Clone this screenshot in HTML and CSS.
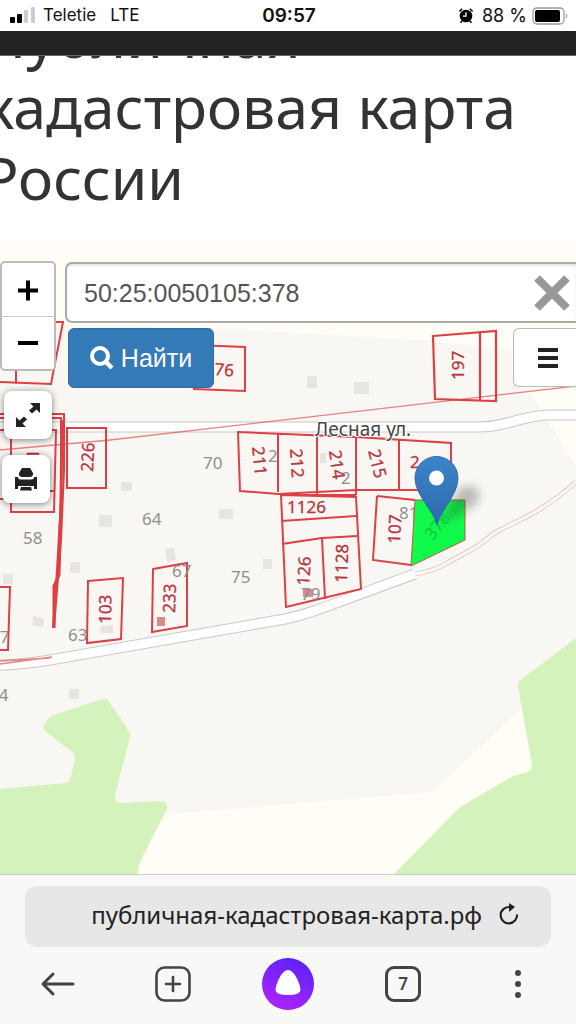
FILE: index.html
```html
<!DOCTYPE html>
<html lang="ru">
<head>
<meta charset="utf-8">
<meta name="viewport" content="width=device-width, initial-scale=1">
<title>Публичная кадастровая карта России</title>
<link rel="stylesheet" href="styles.css">
</head>
<body>
<div class="screen">
  <header class="status">
    <div class="status-left">
      <svg class="signal" viewBox="0 0 26 17" width="26" height="17" aria-hidden="true">
        <rect x="0" y="10" width="5" height="6" rx="1"/><rect x="7" y="7" width="5" height="9" rx="1"/>
        <rect x="14" y="3" width="4" height="13" rx="1" fill="#ccc"/><rect x="21" y="0" width="4" height="16" rx="1" fill="#ccc"/>
      </svg>
      <span>Teletie</span><span>LTE</span>
    </div>
    <time class="clock">09:57</time>
    <div class="status-right">
      <svg viewBox="0 0 14 15" width="14" height="15" aria-hidden="true">
        <circle cx="7" cy="8" r="6.3"/><path d="M3 13l-1.500 1.700M11 13l1.500 1.700" stroke="#000" stroke-width="1.600"/>
        <path d="M.4 3.400L3.200.8M13.600 3.400L10.800.8" stroke="#000" stroke-width="1.500"/>
        <path d="M7 4.200v4H3.800" fill="none" stroke="#fff" stroke-width="1.300"/>
      </svg>
      <span>88 %</span>
      <svg viewBox="0 0 36 18" width="36" height="18" aria-hidden="true">
        <rect x="1" y="1" width="31" height="16" rx="4" fill="none" stroke="#999" stroke-width="1.300"/>
        <rect x="3" y="3" width="25" height="12" rx="2"/><path d="M34 6q2 3 0 6z" fill="#888"/>
      </svg>
    </div>
  </header>
  <div class="site-bar"></div>
  <main>
    <div class="title-clip"><h1>Публичная<br>кадастровая карта<br>России</h1></div>
    <section class="map" aria-label="Кадастровая карта">
      <svg class="map-canvas" viewBox="0 245 576 629" preserveAspectRatio="xMidYMin slice">
        <defs>
          <linearGradient id="pin" x1="0" y1="0" x2="0" y2="1"><stop offset="0" stop-color="#3a85c9"/><stop offset="1" stop-color="#2f68ad"/></linearGradient>
          <filter id="soft" x="-50%" y="-50%" width="200%" height="200%"><feGaussianBlur stdDeviation="5"/></filter>
        </defs>
        <rect y="245" width="576" height="629" fill="#fffdf6"/>
        <path fill="#f9f7f3" d="M0 322L214 328L430 341L510 350L535 400L576 466V690L518 712L432 792L288 804L167 814L0 820z"/>
        <g fill="#d4f2bc">
          <path d="M0 789L66 783Q70 782 71 776L75 759Q75 754 71 751L45 731Q42 729 44 725Q48 717 54 715L102 699Q107 698 110 703L129 731Q131 734 130 737L115 795Q114 803 122 803L160 801Q168 801 167 809L140 862Q138 867 138 874H0z"/>
          <path d="M576 638L519 681Q518 683 518 686L532 765Q532 770 528 772L513 776L460 807L394 874H576z"/>
        </g>
        <g fill="#e7e5e1">
          <path d="M307 376h10v12h-10zM354 382h15v12h-15zM121 482h11v9h-11zM99 515h13v12H99zM165 549l9-1 2 12-9 2zM70 562h10v11H70zM3 574h10v10H3zM33 616l11 2-1 9-11-1zM101 626l12-1v8h-13zM69 689h10v10H69zM219 509h14v10h-14zM263 559h9v10h-9zM320 453h6v10h-6z"/>
        </g>
        <!-- roads -->
        <g fill="none">
          <path stroke="#c9c8c6" stroke-width="11" d="M0 427H478C510 427 520 415 550 415H576M0 665Q18 665 50 660L285 619C310 614 335 603 415 574"/>
          <path stroke="#fff" stroke-width="9" d="M0 427H478C510 427 520 415 550 415H576M0 665Q18 665 50 660L285 619C310 614 335 603 416 573.500"/>
          <path stroke="#e5c9c2" stroke-width="5" d="M415 574Q435 571 449 562L478 546L496 532L530 515Q555 501 576 482"/>
          <path stroke="#fffaf7" stroke-width="3" d="M415 574Q435 571 449 562L478 546L496 532L530 515Q555 501 576 482"/>
        </g>
        <!-- boundaries -->
        <g fill="none" stroke="#dc4045" stroke-width="2">
          <path d="M0 322H63L51 384L0 382M16 384V360M193 345L245 347V391L193 389"/>
          <path d="M433 336L496 331V401L435 399zM480 333V401" stroke-width="2.200"/>
          <path d="M67 428H106V488H67zM0 414H64V470L61 540L54 628M0 418H61V500L57 570L53 628M0 430H56L54 512H11V430M0 499H12M50 491H54"/>
          <path d="M62 420L61 500L59 575L54 586V628" stroke-width="3"/>
          <path d="M238 432L356 437L451 443V490H356L278 494L240 491zM278 434V492M317 435V494M356 437V495M399 440V490"/>
          <path d="M281 495L356 497L361 589L286 607zM281 521L356 516M282 544L322 538L357 536M322 538L325 599M282 495H356"/>
          <path d="M377 496L415 500M377 496L373 560L411 565M88 581L123 578L121 639L87 643zM153 569L187 563V626L152 632zM0 587H10L8 650H0"/>
          <path opacity=".65" stroke-width="1.300" d="M0 450L110 440L576 386M0 664L52 657M0 661L50 658"/>
        </g>
        <path fill="#d98b8b" d="M157 617h8v9h-8zM303 589h10v8h-10z"/>
        <g class="house">
          <text x="203" y="469">70</text><text x="142" y="525">64</text><text x="23" y="544">58</text><text x="231" y="583">75</text>
          <text x="172" y="577">67</text><text x="68" y="641">63</text><text x="-10" y="643">57</text><text x="-11" y="701">74</text>
          <text x="268" y="462">2</text><text x="341" y="484">2</text><text x="301" y="600">79</text><text x="399" y="519">81</text>
        </g>
        <g class="parcel">
          <text x="214" y="375" transform="rotate(5 214 375)">76</text>
          <text transform="translate(464 380) rotate(-90)">197</text>
          <text transform="translate(93 472) rotate(-87)">226</text>
          <text transform="translate(39 459) rotate(-90)">1</text>
          <text transform="translate(252 447) rotate(84)">211</text>
          <text transform="translate(290 449) rotate(86)">212</text>
          <text transform="translate(329 451) rotate(82)">214</text>
          <text transform="translate(368 451) rotate(76)">215</text>
          <text x="410" y="468">2</text><text x="287" y="513">1126</text>
          <text transform="translate(309 586) rotate(-86)">126</text>
          <text transform="translate(347 583) rotate(-88)">1128</text>
          <text transform="translate(400 544) rotate(-87)">107</text>
          <text transform="translate(111 624) rotate(-89)">103</text>
          <text transform="translate(175 613) rotate(-88)">233</text>
        </g>
        <text class="street" x="315" y="436">Лесная ул.</text>
        <path fill="#10fa4b" stroke="#c4573c" stroke-width="1" d="M415 500H465V540L411 566z"/>
        <path d="M440 524L458 490Q472 480 479 492Q482 504 460 514z" fill="#333" opacity=".3" filter="url(#soft)"/>
        <text class="parcel-active" transform="translate(433 541) rotate(-52)">378</text>
        <path fill="url(#pin)" stroke="#2d6dad" stroke-width="1" d="M437 525C434 511 415 495 415 478A21.500 21.500 0 0 1 458 478C458 495 440 511 437 525z"/>
        <circle cx="436.500" cy="478" r="7.500" fill="#fff"/>
      </svg>
      <div class="map-ui">
        <div class="tools">
          <div class="zoom">
            <button type="button" aria-label="Приблизить"><svg viewBox="0 0 22 22" width="22" height="22"><path d="M1 11.500h20M11 1.500v20" stroke="#000" stroke-width="4"/></svg></button>
            <button type="button" aria-label="Отдалить"><svg viewBox="0 0 22 22" width="22" height="22"><path d="M1 11h20" stroke="#000" stroke-width="4"/></svg></button>
          </div>
          <button class="tool full" type="button" aria-label="Во весь экран"><svg viewBox="0 0 26 26" width="26" height="26" fill="#222"><path d="M15 1h10v10l-3.500-3.500-4.500 4-3-3 4.500-4zM11 25H1V15l3.500 3.500 4.500-4 3 3-4.500 4z"/></svg></button>
          <button class="tool print" type="button" aria-label="Печать"><svg viewBox="0 0 24 24" width="24" height="24" fill="#222"><path d="M8 1h8l3 5v2q-1 2-3 2H8q-2 0-3-2V6zM1 10h3v1q1 1.500 3 1.500h10q2 0 3-1.500v-1h3v12h-3v-3H4v3H1zM7 20h10l1 3.500H6z"/></svg></button>
        </div>
        <form class="search" onsubmit="return false">
          <div class="field">
            <input type="text" value="50:25:0050105:378" aria-label="Кадастровый номер">
            <button class="clear" type="reset" aria-label="Очистить"><svg viewBox="0 0 36 36" width="36" height="36"><path d="M3 3L33 33M33 3L3 33" stroke="#999" stroke-width="8"/></svg></button>
          </div>
          <div class="actions">
            <button class="find" type="submit"><svg viewBox="0 0 24 24" width="24" height="24" fill="none" stroke="#fff"><circle cx="10" cy="10" r="8" stroke-width="4"/><path d="M15.500 15.500L22 22" stroke-width="4.500"/></svg>Найти</button>
            <button class="menu" type="button" aria-label="Меню"><svg viewBox="0 0 22 22" width="22" height="22"><path d="M1 3h20M1 11h20M1 19h20" stroke="#222" stroke-width="4"/></svg></button>
          </div>
        </form>
      </div>
    </section>
  </main>
  <footer class="browser">
    <div class="address">
      <span>публичная-кадастровая-карта.рф</span>
      <button type="button" aria-label="Обновить"><svg viewBox="0 0 22 24" width="22" height="24"><path d="M19 11.500A8.200 8.200 0 1 1 11 4h3" fill="none" stroke="#222" stroke-width="2.200"/><path d="M11 0l6 4-6 5z" fill="#222"/></svg></button>
    </div>
    <nav class="tabs" aria-label="Браузер">
      <button type="button" aria-label="Назад"><svg viewBox="0 0 36 26" width="36" height="26" fill="none" stroke="#444" stroke-width="3" stroke-linecap="round" stroke-linejoin="round"><path d="M33 13H3M13 3L3 13l10 10"/></svg></button>
      <button type="button" aria-label="Новая вкладка"><svg viewBox="0 0 36 36" width="36" height="36" fill="none" stroke="#444" stroke-width="2.600"><rect x="1.500" y="1.500" width="33" height="33" rx="8"/><path d="M18 11v14M11 18h14" stroke-linecap="round"/></svg></button>
      <button type="button" aria-label="Алиса"><svg viewBox="0 0 52 52" width="52" height="52"><defs><linearGradient id="alice" x1=".7" y1="0" x2=".3" y2="1"><stop offset="0" stop-color="#5a22fa"/><stop offset="1" stop-color="#ae24fb"/></linearGradient></defs><circle cx="26" cy="26" r="26" fill="url(#alice)"/><path fill="#fff" d="M26 12C32 12 38 25 38.500 32Q38.500 37 26 37T13.500 32C14 25 20 12 26 12z"/></svg></button>
      <button type="button" aria-label="Вкладки: 7"><span class="count">7</span></button>
      <button type="button" aria-label="Ещё"><svg viewBox="0 0 6 28" width="6" height="28" fill="#444"><circle cx="3" cy="3" r="3"/><circle cx="3" cy="14" r="3"/><circle cx="3" cy="25" r="3"/></svg></button>
    </nav>
  </footer>
</div>
</body>
</html>
```
FILE: styles.css
```css
* { box-sizing: border-box; }
body { margin: 0; background: #fff; font-family: "Noto Sans", sans-serif; color: #333; }
button { margin: 0; padding: 0; border: 0; background: none; color: inherit; font: inherit; display: flex; align-items: center; justify-content: center; }
svg { display: block; flex: none; }
.screen { display: flex; flex-direction: column; min-height: 100vh; overflow: hidden; }
.status { display: grid; grid-template-columns: 1fr auto 1fr; align-items: center; padding: 0 8px 0 10px; line-height: 31px; background: #fff; color: #111; font-family: Inter, sans-serif; font-size: 17px; }
.status-left, .status-right { display: flex; align-items: center; }
.status-left { gap: 14px; }
.signal { margin-right: -7px; }
.status-right { justify-content: flex-end; gap: 5px; }
.status-right span { margin-left: 4px; font-size: 18px; }
.clock { font-size: 19px; font-weight: 600; }
.site-bar { height: 25px; background: #222; border-bottom: 1px solid #666; }
main { flex: 1; display: flex; flex-direction: column; }
.title-clip { overflow: hidden; padding-bottom: 32px; }
h1 { margin: -56px 0 0 -17px; font-size: 59px; line-height: 71px; font-weight: 400; white-space: nowrap; }
.map { position: relative; flex: 1; overflow: hidden; }
.map-canvas { position: absolute; inset: 0; width: 100%; height: 100%; }
.house text, .parcel text, .parcel-active { font-size: 17px; }
.house { fill: #8f8f8f; }
.parcel { fill: #b8353b; stroke: #b8353b; stroke-width: 0.3px; }
.parcel text { stroke-linejoin: round; }
.parcel-active { fill: #12c83e; }
.street { font-size: 19px; fill: #444; stroke: #fff; stroke-width: 2px; paint-order: stroke; }
.map-ui { position: relative; display: flex; gap: 9px; padding-top: 16px; font-family: "Liberation Sans", sans-serif; }
.tools { flex: none; width: 56px; }
.zoom { border: 2px solid #bbb; border-radius: 5px; background: #fff; }
.zoom button { width: 100%; height: 53px; }
.zoom button + button { border-top: 1px solid #ccc; }
.tool { width: 48px; height: 48px; border-radius: 8px; background: #fff; box-shadow: 0 1px 7px rgba(0, 0, 0, .5); }
.full { margin: 20px 0 0 4px; }
.print { margin: 16px 0 0 2px; }
.search { flex: 1; min-width: 0; padding-top: 1px; }
.field { display: flex; align-items: center; height: 61px; padding: 0 6px 0 17px; background: #fff; border: 2px solid #aaa; border-right: 0; border-radius: 7px 0 0 7px; box-shadow: inset 0 2px 2px rgba(0, 0, 0, .1); }
.field input { flex: 1; min-width: 0; padding: 2px 0 0; border: 0; outline: 0; background: none; color: #555; font: 25px "Liberation Sans", sans-serif; }
.actions { display: flex; justify-content: space-between; align-items: flex-start; padding: 5px 0 0 3px; }
.find { gap: 7px; width: 146px; height: 60px; border: 1px solid #2e6da4; border-radius: 6px; background: #337ab7; color: #fff; font-size: 25px; }
.menu { width: 63px; height: 59px; padding-left: 5px; border: 1px solid #bbb; border-right: 0; border-radius: 6px 0 0 6px; background: #fff; }
.browser { border-top: 1px solid #ccc; background: #f8f8f7; }
.address { display: flex; align-items: center; justify-content: flex-end; gap: 16px; height: 61px; margin: 11px 25px 0; padding: 0 31px 4px 0; border-radius: 12px; background: #e7e7e7; color: #222; font-size: 24px; }
.tabs { display: grid; grid-template-columns: repeat(5, 1fr); height: 77px; align-items: center; padding-bottom: 4px; }
.tabs button { height: 52px; }
.count { width: 36px; height: 36px; border: 3px solid #444; border-radius: 9px; color: #444; font-size: 17px; line-height: 30px; font-weight: 600; text-align: center; }
```
